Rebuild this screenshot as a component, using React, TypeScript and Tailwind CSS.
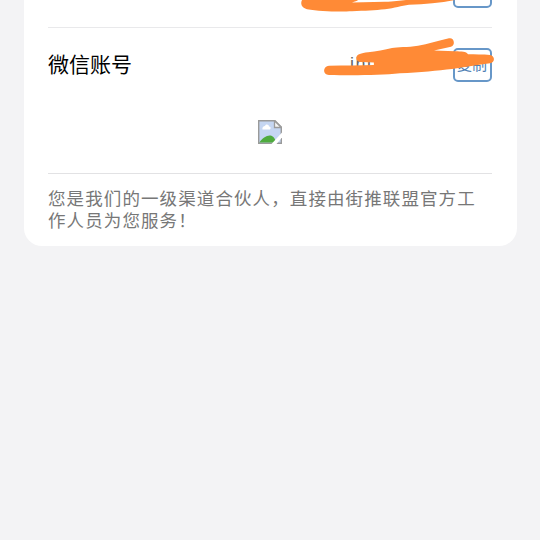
import type { ReactNode } from "react";

function CopyButton({ label }: { label?: string }) {
    return (
        <button className="h-[34px] w-[39px] rounded-[5px] border-2 border-[#6797c8] bg-white text-center text-[15px] leading-[28px] text-[#4f7fb5]">
            {label}
        </button>
    );
}

function Row({ title, children }: { title?: string; children: ReactNode }) {
    return (
        <div className="flex h-[73px] shrink-0 items-center justify-between">
            <span className="-mt-px text-[21px] leading-none text-black">{title}</span>
            <div className="flex h-[34px] items-center">{children}</div>
        </div>
    );
}

// Hand-drawn marker strokes that hide the account details
function Scribble() {
    return (
        <svg className="pointer-events-none absolute top-0 left-0" width="540" height="90" viewBox="0 0 540 90" fill="#ff8a36">
            <path d="M302 0C300 4 302 8 307 9.200C320 11.500 340 11.800 352 11.200C365 10.800 375 10.300 385 9.300C395 8 401 6 409 4.800C425 4 440 3.300 455 0H406C400 .900 394 1.400 385 1.800L352 2.500C355 1.500 357 1 358 0Z" />
            <path d="M329 65.700C323 66 322 74.500 329 75C350 75.500 380 75.500 400 73.300C420 72.500 438 70.500 452 69C465 67.500 478 64.500 490 63.300C495.500 62.500 495 55.500 490 55C483 54.300 475 54.500 468 54.300C466 51.200 462 51.500 455 51.200L434 50.500L451 46.700C456 45 454 37 449 38.300C438 41 428 44 418 45.700C408 47.500 397 46.800 392 48C385 50 376 51.300 368 52.300C361 53.200 357 54.500 356.500 57C356 60 357.500 62 362 62L374 62.500V65C360 65.500 345 65.500 329 65.700Z" />
        </svg>
    );
}

function BrokenImage() {
    return (
        <svg width="24" height="24" viewBox="0 0 24 24">
            <path d="M.7.700H17L23.300 7V23.300H.7Z" fill="#c5d6f2" stroke="#9a9a9a" strokeWidth="1.400" />
            <path d="M16.500.700V7.500H23.300Z" fill="#f5f5f5" stroke="#9b9b9b" strokeWidth="1.300" />
            <path d="M4.500 9.500C4 7 6 6 7 6C8 3.500 11 4.500 11 6.500C13 6.500 13 8.500 12 9.500Z" fill="#fff" />
            <path d="M1.400 22.600C4 18 9 15 12.500 15.500C15 16 17 18 18 22.600Z" fill="#4fab3e" />
            <path d="M13.500 24L24 12.500V17.500L18.500 24Z" fill="#fff" />
        </svg>
    );
}

export default function App() {
    return (
        <div className="relative h-[540px] w-[540px] overflow-hidden bg-[#f3f3f5] px-6 font-['Liberation_Sans','Noto_Sans_CJK_SC',sans-serif]">
            <div className="flex h-[246px] w-[492.500px] flex-col justify-end rounded-b-[18px] bg-white pr-[25px] pl-6">
                <Row>
                    <CopyButton />
                </Row>
                <div className="h-px shrink-0 bg-[#e9e9eb]" />
                <Row title="微信账号">
                    <span className="mr-[74px] -mt-px text-[18px] tracking-[1.500px] text-[#666]">jhu</span>
                    <CopyButton label="复制" />
                </Row>
                <div className="flex h-[73px] shrink-0 justify-center border-b border-[#e2e2e4] pt-[19px]">
                    <BrokenImage />
                </div>
                <p className="h-[72px] shrink-0 pt-[15px] text-[17.500px] leading-[21.500px] tracking-[1.100px] text-[#777]">
                    您是我们的一级渠道合伙人，直接由街推联盟官方工作人员为您服务！
                </p>
            </div>
            <Scribble />
        </div>
    );
}
